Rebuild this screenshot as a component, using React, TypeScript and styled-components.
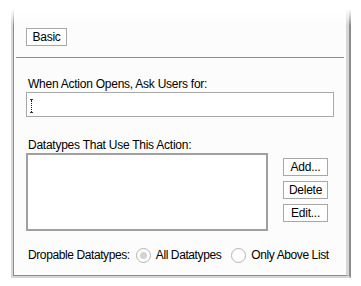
import React from 'react';
import styled, { createGlobalStyle } from 'styled-components';

const Global = createGlobalStyle`
  html, body {
    margin: 0;
    padding: 0;
    background: #ffffff;
  }
  body {
    font-family: "Liberation Sans", Arial, sans-serif;
    font-size: 12px;
    letter-spacing: -0.25px;
    color: #000000;
  }
`;

const Frame = styled.div`
  position: relative;
  box-sizing: border-box;
  margin-left: 11px;
  width: 340px;
  height: 278px;
  background: #fcfcfc;
  border-left: 2px solid #d6d6d6;
  border-right: 2px solid #8c8c8c;
  border-bottom: 2px solid #d6d6d6;

  /* border fades out towards the top edge */
  &::before {
    content: '';
    position: absolute;
    top: 0;
    left: -2px;
    right: -2px;
    height: 26px;
    background: linear-gradient(#ffffff 35%, rgba(252, 252, 252, 0));
    pointer-events: none;
  }
`;

const Inner = styled.div`
  box-sizing: border-box;
  height: 100%;
  border-left: 1px solid #8c8c8c;
  border-right: 3px solid #d6d6d6;
  border-bottom: 1px solid #8c8c8c;
  display: flex;
  flex-direction: column;
`;

const Header = styled.div`
  position: relative;
  z-index: 1;
  padding: 28px 0 11px 10px;
  border-bottom: 1px solid #8c8c8c;
  margin: 0 2px;
`;

const Button = styled.button<{ $width?: number }>`
  box-sizing: border-box;
  display: block;
  width: ${p => p.$width ?? 45}px;
  height: 18px;
  padding: 0;
  margin: 0;
  font-family: "Liberation Sans", Arial, sans-serif;
  font-size: 12px;
  letter-spacing: -0.25px;
  color: #000000;
  background: #ffffff;
  border: 1px solid #a8a8a8;
  border-radius: 0;
  white-space: nowrap;
`;

const Body = styled.div`
  padding: 19px 15px 0 12px;
  display: flex;
  flex-direction: column;
`;

const Label = styled.div<{ $gap?: number }>`
  height: 14px;
  line-height: 14px;
  padding-left: 2px;
  margin-top: ${p => p.$gap ?? 0}px;
  white-space: nowrap;
`;

const TextBox = styled.div`
  box-sizing: border-box;
  margin-top: 1px;
  height: 25px;
  width: 308px;
  background: #ffffff;
  border: 1px solid #a8a8a8;
  position: relative;
`;

const Caret = styled.div`
  position: absolute;
  left: 3px;
  top: 6px;
  width: 3px;
  height: 14px;
  border-top: 1px solid #333;
  border-bottom: 1px solid #333;
  box-sizing: border-box;
  &::after {
    content: '';
    position: absolute;
    left: 1px;
    top: 0;
    bottom: 0;
    border-left: 1px dotted #222;
  }
`;

const ListRow = styled.div`
  display: flex;
  margin-top: 1px;
`;

const ListBox = styled.div`
  box-sizing: border-box;
  width: 242px;
  height: 78px;
  background: #ffffff;
  border: 2px solid #a0a0a0;
`;

const Side = styled.div`
  display: flex;
  flex-direction: column;
  gap: 5px;
  margin-left: 15px;
  margin-top: 5px;
`;

const RadioRow = styled.div`
  display: flex;
  align-items: center;
  margin-top: 16px;
  height: 16px;
  padding-left: 2px;
  white-space: nowrap;
  letter-spacing: -0.4px;
`;

const RadioGroupLabel = styled.span`
  margin-right: 6px;
`;

const Radio = styled.span<{ $checked?: boolean }>`
  box-sizing: border-box;
  flex: none;
  display: inline-block;
  position: relative;
  width: 15px;
  height: 15px;
  border-radius: 50%;
  border: 1px solid #b4b4b4;
  background: #ffffff;
  margin-right: 5px;
  &::after {
    content: '';
    display: ${p => (p.$checked ? 'block' : 'none')};
    position: absolute;
    left: 3px;
    top: 3px;
    width: 7px;
    height: 7px;
    border-radius: 50%;
    background: #d2d2d2;
  }
`;

const RadioText = styled.span`
  margin-right: 10px;
`;

export default function App() {
  return (
    <>
      <Global />
      <Frame>
        <Inner>
          <Header>
            <Button $width={41}>Basic</Button>
          </Header>
          <Body>
            <Label>When Action Opens, Ask Users for:</Label>
            <TextBox>
              <Caret />
            </TextBox>
            <Label $gap={21}>Datatypes That Use This Action:</Label>
            <ListRow>
              <ListBox />
              <Side>
                <Button>Add...</Button>
                <Button>Delete</Button>
                <Button>Edit...</Button>
              </Side>
            </ListRow>
            <RadioRow>
              <RadioGroupLabel>Dropable Datatypes:</RadioGroupLabel>
              <Radio $checked />
              <RadioText>All Datatypes</RadioText>
              <Radio />
              <RadioText>Only Above List</RadioText>
            </RadioRow>
          </Body>
        </Inner>
      </Frame>
    </>
  );
}
